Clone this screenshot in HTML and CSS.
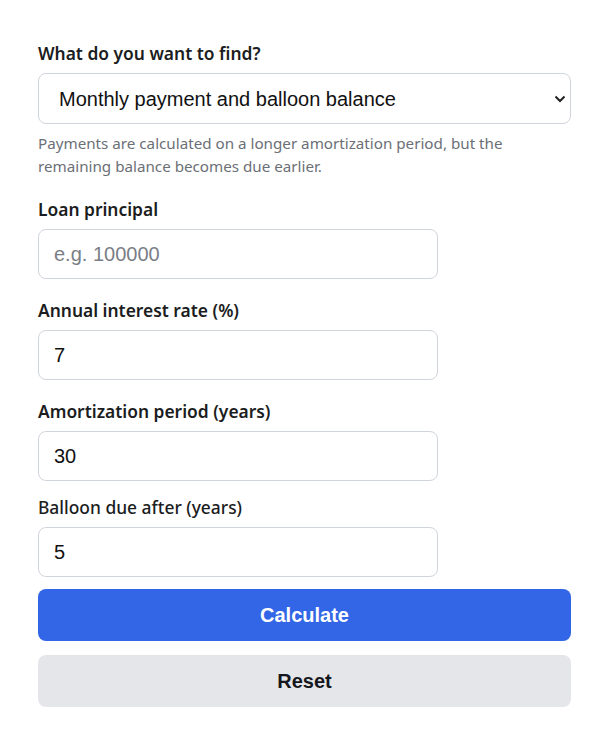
FILE: index.html
```html
<!DOCTYPE html>
<html lang="en">
<head>
    <meta charset="UTF-8">
    <meta name="viewport" content="width=device-width, initial-scale=1.0">
    <title>Balloon Loan Calculator</title>
    <link rel="stylesheet" href="styles.css">
</head>
<body>
    <form class="calc" onsubmit="return false;">
        <!-- What to solve for -->
        <div class="field">
            <label for="mode">What do you want to find?</label>
            <div class="select-wrap">
                <select id="mode">
                    <option>Monthly payment and balloon balance</option>
                    <option>Balloon balance only</option>
                </select>
                <svg class="chevron" width="12" height="8" viewBox="0 0 12 8">
                    <path d="M1.5 1.5 L6 6 L10.5 1.5" fill="none" stroke="#222" stroke-width="2"/>
                </svg>
            </div>
            <p class="help">Payments are calculated on a longer amortization period, but the remaining balance becomes due earlier.</p>
        </div>

        <div class="field">
            <label for="principal">Loan principal</label>
            <input type="text" id="principal" placeholder="e.g. 100000">
        </div>
        <div class="field">
            <label for="rate">Annual interest rate (%)</label>
            <input type="text" id="rate" value="7">
        </div>
        <div class="field tight">
            <label for="term">Amortization period (years)</label>
            <input type="text" id="term" value="30">
        </div>
        <!-- balloon term sits in its own block, lighter label -->
        <div class="field last">
            <label for="balloon">Balloon due after (years)</label>
            <input type="text" id="balloon" value="5">
        </div>

        <!-- Actions -->
        <button type="submit" class="btn primary">Calculate</button>
        <button type="reset" class="btn secondary">Reset</button>
    </form>
</body>
</html>
```

FILE: styles.css
```css
/* Page */
body {
    margin: 0;
    background: #fff;
    color: #1b1d21;
    font-family: "Segoe UI", "Noto Sans", sans-serif;
}
.calc {
    width: 533px;
    padding: 41px 0 0 38px;
}

/* Form fields */
.field {
    margin-bottom: 19px;
}
.field.tight {
    margin-bottom: 14px;
}
.field.last {
    margin-bottom: 12px;
}
.field label {
    display: block;
    font-size: 17.4px;
    font-weight: 600;
    line-height: 24px;
    margin-bottom: 8px;
}
.field.last label {
    font-weight: 500;
}
.field input,
.field select {
    box-sizing: border-box;
    height: 50px;
    border: 1px solid #d0d4dc;
    border-radius: 8px;
    background: #fff;
    color: #111;
    font-family: "Liberation Sans", Arial, sans-serif;
    font-size: 20px;
    outline: none;
}
.field input {
    width: 400px;
    padding: 0 15px;
}
.field input::placeholder {
    color: #7a7e86;
}
.select-wrap {
    position: relative;
}
.field select {
    width: 533px;
    height: 51px;
    padding: 0 40px 0 20px;
    appearance: none;
    -webkit-appearance: none;
}
.chevron {
    position: absolute;
    right: 5px;
    top: 22px;
    pointer-events: none;
}
.help {
    margin: 8px 0 0;
    font-size: 15.2px;
    line-height: 23px;
    color: #6b6f76;
}

/* Buttons */
.btn {
    display: block;
    width: 533px;
    height: 52px;
    border: none;
    border-radius: 8px;
    font-family: "Liberation Sans", Arial, sans-serif;
    font-size: 20px;
    font-weight: bold;
    cursor: pointer;
}
.primary {
    background: #3366e6;
    color: #fff;
    margin-bottom: 14px;
}
.secondary {
    background: #e5e6ea;
    color: #15171c;
}
```
